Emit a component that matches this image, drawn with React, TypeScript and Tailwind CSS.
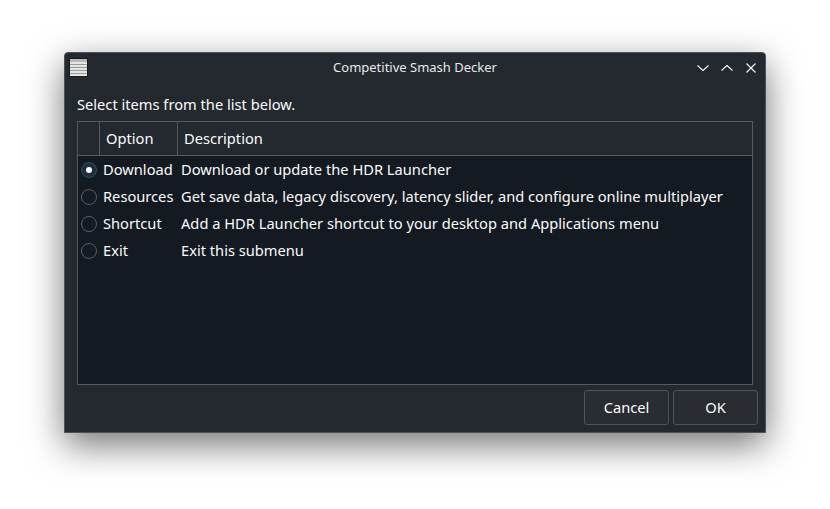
const rows = [
  { option: "Download", description: "Download or update the HDR Launcher", checked: true },
  { option: "Resources", description: "Get save data, legacy discovery, latency slider, and configure online multiplayer", checked: false },
  { option: "Shortcut", description: "Add a HDR Launcher shortcut to your desktop and Applications menu", checked: false },
  { option: "Exit", description: "Exit this submenu", checked: false },
];

function AppIcon() {
  return (
    <svg width="19" height="19" viewBox="0 0 19 19" className="block">
      <rect x="0" y="0" width="19" height="19" fill="#15181d" />
      <rect x="1" y="1" width="17" height="17" fill="#e4e4e2" />
      <rect x="1" y="1" width="17" height="3" fill="#b9b9b7" />
      <path d="M1 6.5h17M1 9.5h17M1 12.5h17M1 15.5h17" stroke="#9a9a98" strokeWidth="1" />
    </svg>
  );
}

function Radio({ checked }: { checked: boolean }) {
  return (
    <div
      className={`flex h-4 w-4 shrink-0 items-center justify-center rounded-full border ${
        checked ? "border-[#2d4f66] bg-[#1b2f3e]" : "border-[#5b5f64]"
      }`}
    >
      {checked && <div className="h-1.5 w-1.5 rounded-full bg-[#fcfcfc]" />}
    </div>
  );
}

export default function App() {
  return (
    <div className="h-[509px] w-[830px] bg-white pl-[64px] pt-[52px] font-['Noto_Sans',sans-serif] text-[14.67px] text-[#fcfcfc]">
      <div className="flex h-[381px] w-[702px] flex-col rounded-t-[4px] border border-[#4d4f5c] bg-[#24282f] shadow-[0_12px_36px_rgba(0,0,0,0.55)]">
        <div className="flex h-[29px] shrink-0 items-center pl-[4px] pr-[6px]">
          <div className="w-[66px]">
            <AppIcon />
          </div>
          <div className="flex-1 text-center text-[13px] leading-[29px] text-[#e8e9ea]">Competitive Smash Decker</div>
          <div className="flex w-[64px] items-center gap-[8px] text-[#fcfcfc]">
            <svg width="16" height="16" viewBox="0 0 16 16" fill="none" stroke="currentColor" strokeWidth="1.1">
              <path d="M2.5 5.5 8 10.5 13.5 5.5" />
            </svg>
            <svg width="16" height="16" viewBox="0 0 16 16" fill="none" stroke="currentColor" strokeWidth="1.1">
              <path d="M2.5 10.5 8 5.5 13.5 10.5" />
            </svg>
            <svg width="16" height="16" viewBox="0 0 16 16" fill="none" stroke="currentColor" strokeWidth="1.1">
              <path d="M3.5 3.5 12.5 12.5M12.5 3.5 3.5 12.5" />
            </svg>
          </div>
        </div>

        <div className="flex min-h-0 flex-1 flex-col pl-[12px] pr-[7px] pb-[7px]">
          <div className="mt-[13px] h-[26px] pr-[5px] leading-[19px]">Select items from the list below.</div>
          <div className="mr-[5px] flex h-[264px] flex-col border border-[#565a5f] bg-[#141a21]">
            <div className="flex h-[34px] shrink-0 border-b border-[#565a5f] bg-[#24282f]">
              <div className="w-[22px] border-r border-[#565a5f]" />
              <div className="w-[78px] border-r border-[#565a5f] pl-[6px] leading-[33px]">Option</div>
              <div className="flex-1 pl-[6px] leading-[33px]">Description</div>
            </div>
            {rows.map((row) => (
              <div key={row.option} className="flex h-[27px] shrink-0 items-center">
                <div className="flex w-[25px] shrink-0 justify-start pl-[3px]">
                  <Radio checked={row.checked} />
                </div>
                <div className="w-[78px] shrink-0 whitespace-nowrap pb-[2px]">{row.option}</div>
                <div className="whitespace-nowrap pb-[2px]">{row.description}</div>
              </div>
            ))}
          </div>
          <div className="mt-[5px] flex justify-end gap-[4px]">
            <button className="h-[35px] w-[85px] rounded-[3px] border border-[#50545a] bg-[#292c33] pb-[2px] text-[#fcfcfc]">Cancel</button>
            <button className="h-[35px] w-[85px] rounded-[3px] border border-[#50545a] bg-[#292c33] pb-[2px] text-[#fcfcfc]">OK</button>
          </div>
        </div>
      </div>
    </div>
  );
}
